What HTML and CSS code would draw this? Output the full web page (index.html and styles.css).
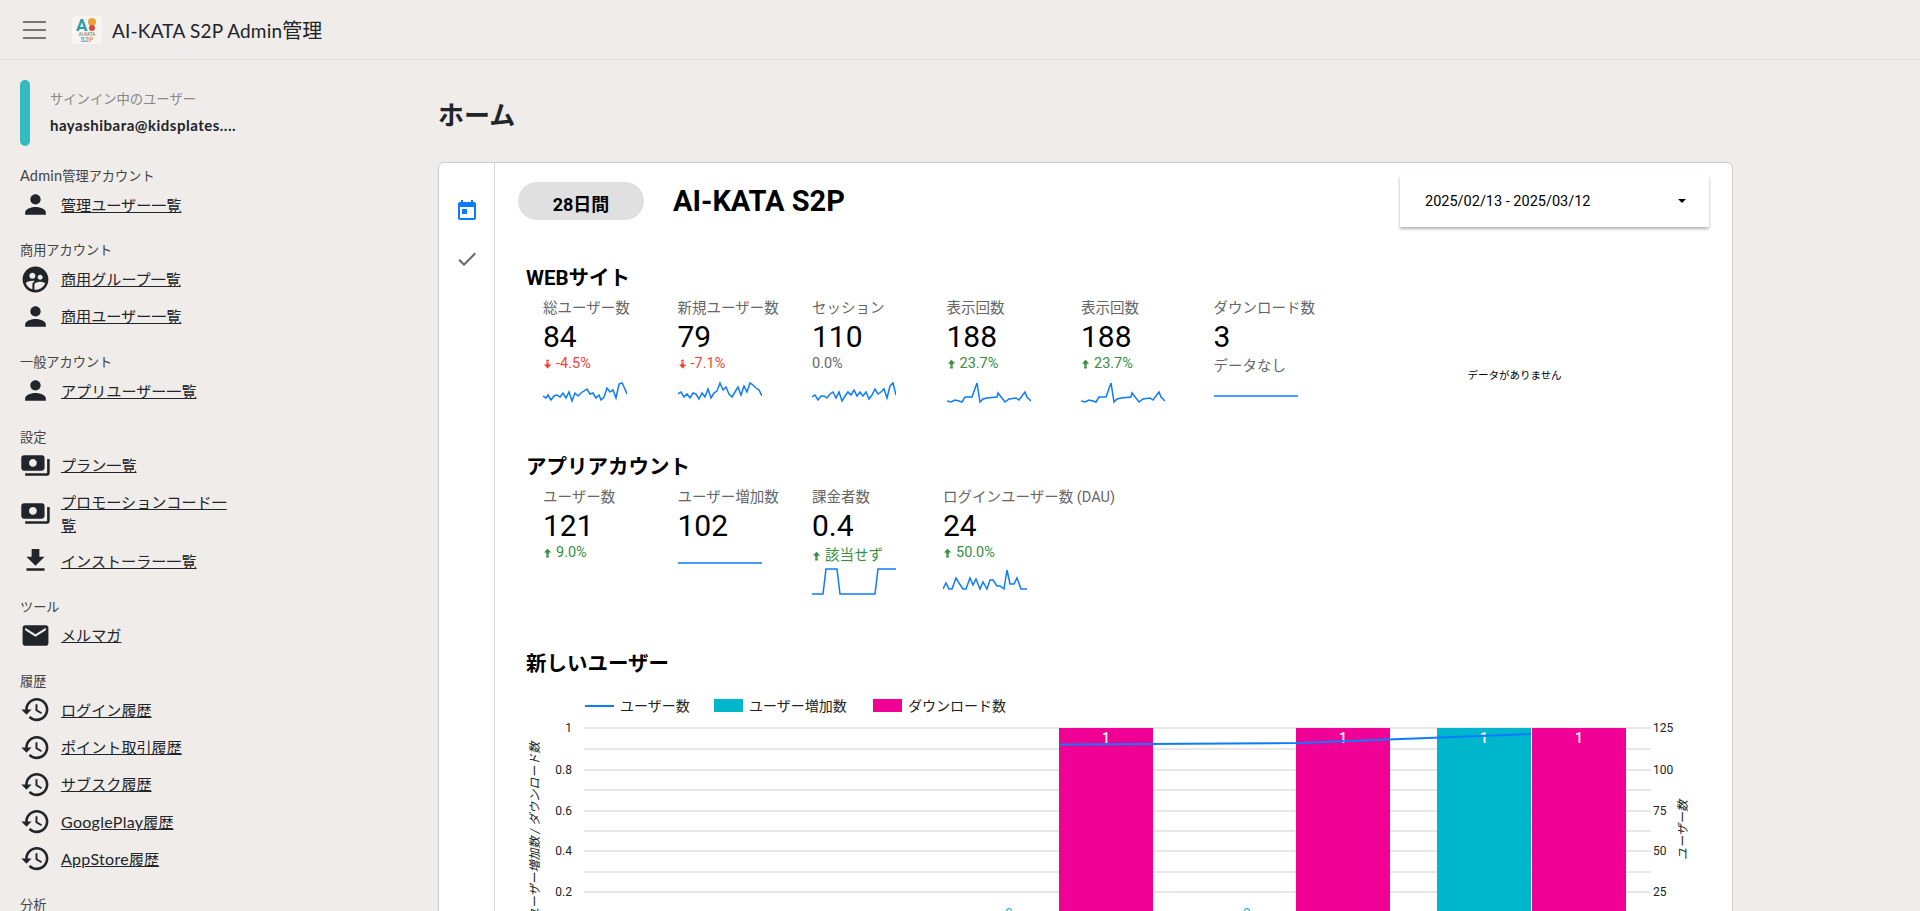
FILE: index.html
```html
<!DOCTYPE html>
<html lang="ja">

<head>
    <meta charset="UTF-8">
    <meta name="viewport" content="width=device-width, initial-scale=1.0">
    <title>AI-KATA S2P Admin管理</title>
    <link rel="stylesheet" href="styles.css">
</head>

<body>

    <header class="topbar">
        <div class="menu-btn"><span></span><span></span><span></span></div>
        <svg class="logo" viewBox="0 0 30 28">
            <rect width="30" height="28" rx="3" fill="#f6f5f2" />
            <text x="4" y="15" class="logo-a">A</text>
            <circle cx="20" cy="6" r="4" fill="#e8a33d" />
            <circle cx="20" cy="12" r="3" fill="#d8483f" />
            <text x="15" y="19.500" class="logo-name">AI-KATA</text>
            <text x="15" y="26" class="logo-s2p"><tspan fill="#3fa9c0">S</tspan><tspan fill="#e8799a">2</tspan><tspan fill="#e8a33d">P</tspan></text>
        </svg>
        <div class="brand"><span class="latin">AI-KATA S2P Admin</span>管理</div>
    </header>

    <div class="layout">
        <nav class="sidebar">
            <div class="signed-in">
                <div class="signed-bar"></div>
                <div class="signed-text">
                    <p class="signed-label">サインイン中のユーザー</p>
                    <p class="signed-mail">hayashibara@kidsplates....</p>
                </div>
            </div>

            <div class="nav-group">
                <p class="nav-title"><span class="latin">Admin</span>管理アカウント</p>
                <div class="nav-item">
                    <svg class="nav-icon" viewBox="0 0 24 24"><path d="M12 12c2.21 0 4-1.79 4-4s-1.79-4-4-4-4 1.79-4 4 1.79 4 4 4zm0 2c-2.67 0-8 1.34-8 4v2h16v-2c0-2.66-5.33-4-8-4z" /></svg>
                    <a href="#">管理ユーザー一覧</a>
                </div>
            </div>

            <div class="nav-group">
                <p class="nav-title">商用アカウント</p>
                <div class="nav-item">
                    <svg class="nav-icon" viewBox="0 0 24 24"><path d="M11.99 2c-5.52 0-10 4.48-10 10s4.48 10 10 10 10-4.48 10-10-4.48-10-10-10zm3.61 6.34c1.07 0 1.93.86 1.93 1.93 0 1.07-.86 1.93-1.93 1.93-1.07 0-1.93-.86-1.93-1.93-.01-1.07.86-1.93 1.93-1.93zm-6-1.58c1.3 0 2.36 1.06 2.36 2.36 0 1.3-1.06 2.36-2.36 2.36s-2.36-1.06-2.36-2.36c0-1.31 1.05-2.36 2.36-2.36zm0 9.13v3.75c-2.4-.75-4.3-2.6-5.14-4.96 1.05-1.12 3.67-1.69 5.14-1.69.53 0 1.2.08 1.9.22-1.64.87-1.9 2.02-1.9 2.68zM11.99 20c-.27 0-.53-.01-.79-.04v-4.07c0-1.42 2.94-2.13 4.4-2.13 1.07 0 2.92.39 3.84 1.15-1.17 2.97-4.06 5.09-7.45 5.09z" /></svg>
                    <a href="#">商用グループ一覧</a>
                </div>
                <div class="nav-item">
                    <svg class="nav-icon" viewBox="0 0 24 24"><path d="M12 12c2.21 0 4-1.79 4-4s-1.79-4-4-4-4 1.79-4 4 1.79 4 4 4zm0 2c-2.67 0-8 1.34-8 4v2h16v-2c0-2.66-5.33-4-8-4z" /></svg>
                    <a href="#">商用ユーザー一覧</a>
                </div>
            </div>

            <div class="nav-group">
                <p class="nav-title">一般アカウント</p>
                <div class="nav-item">
                    <svg class="nav-icon" viewBox="0 0 24 24"><path d="M12 12c2.21 0 4-1.79 4-4s-1.79-4-4-4-4 1.79-4 4 1.79 4 4 4zm0 2c-2.67 0-8 1.34-8 4v2h16v-2c0-2.66-5.33-4-8-4z" /></svg>
                    <a href="#">アプリユーザー一覧</a>
                </div>
            </div>

            <div class="nav-group">
                <p class="nav-title">設定</p>
                <div class="nav-item">
                    <svg class="nav-icon" viewBox="0 0 24 24"><path d="M19 14V6c0-1.100-.9-2-2-2H3c-1.100 0-2 .9-2 2v8c0 1.100.9 2 2 2h14c1.100 0 2-.9 2-2zm-9-1c-1.660 0-3-1.340-3-3s1.340-3 3-3 3 1.340 3 3-1.340 3-3 3zm13-6v11c0 1.100-.9 2-2 2H4v-2h17V7h2z" /></svg>
                    <a href="#">プラン一覧</a>
                </div>
                <div class="nav-item nav-item-wrap">
                    <svg class="nav-icon" viewBox="0 0 24 24"><path d="M19 14V6c0-1.100-.9-2-2-2H3c-1.100 0-2 .9-2 2v8c0 1.100.9 2 2 2h14c1.100 0 2-.9 2-2zm-9-1c-1.660 0-3-1.340-3-3s1.340-3 3-3 3 1.340 3 3-1.340 3-3 3zm13-6v11c0 1.100-.9 2-2 2H4v-2h17V7h2z" /></svg>
                    <a href="#">プロモーションコード一覧</a>
                </div>
                <div class="nav-item">
                    <svg class="nav-icon" viewBox="0 0 24 24"><path d="M19 9h-4V3H9v6H5l7 7 7-7zM5 18v2h14v-2H5z" /></svg>
                    <a href="#">インストーラー一覧</a>
                </div>
            </div>

            <div class="nav-group">
                <p class="nav-title">ツール</p>
                <div class="nav-item">
                    <svg class="nav-icon" viewBox="0 0 24 24"><path d="M20 4H4c-1.100 0-1.990.9-1.990 2L2 18c0 1.100.9 2 2 2h16c1.100 0 2-.9 2-2V6c0-1.100-.9-2-2-2zm0 4l-8 5-8-5V6l8 5 8-5v2z" /></svg>
                    <a href="#">メルマガ</a>
                </div>
            </div>

            <div class="nav-group">
                <p class="nav-title">履歴</p>
                <div class="nav-item">
                    <svg class="nav-icon" viewBox="0 0 24 24"><path d="M13 3c-4.970 0-9 4.030-9 9H1l3.890 3.890.07.14L9 12H6c0-3.870 3.130-7 7-7s7 3.130 7 7-3.130 7-7 7c-1.930 0-3.680-.79-4.940-2.060l-1.420 1.420C8.270 19.990 10.510 21 13 21c4.970 0 9-4.030 9-9s-4.030-9-9-9zm-1 5v5l4.280 2.540.72-1.210-3.500-2.080V8H12z" /></svg>
                    <a href="#">ログイン履歴</a>
                </div>
                <div class="nav-item">
                    <svg class="nav-icon" viewBox="0 0 24 24"><path d="M13 3c-4.970 0-9 4.030-9 9H1l3.890 3.890.07.14L9 12H6c0-3.870 3.130-7 7-7s7 3.130 7 7-3.130 7-7 7c-1.930 0-3.680-.79-4.940-2.060l-1.420 1.420C8.270 19.990 10.510 21 13 21c4.970 0 9-4.030 9-9s-4.030-9-9-9zm-1 5v5l4.280 2.540.72-1.210-3.500-2.080V8H12z" /></svg>
                    <a href="#">ポイント取引履歴</a>
                </div>
                <div class="nav-item">
                    <svg class="nav-icon" viewBox="0 0 24 24"><path d="M13 3c-4.970 0-9 4.030-9 9H1l3.890 3.890.07.14L9 12H6c0-3.870 3.130-7 7-7s7 3.130 7 7-3.130 7-7 7c-1.930 0-3.680-.79-4.940-2.060l-1.420 1.420C8.270 19.990 10.510 21 13 21c4.970 0 9-4.030 9-9s-4.030-9-9-9zm-1 5v5l4.280 2.540.72-1.210-3.500-2.080V8H12z" /></svg>
                    <a href="#">サブスク履歴</a>
                </div>
                <div class="nav-item">
                    <svg class="nav-icon" viewBox="0 0 24 24"><path d="M13 3c-4.970 0-9 4.030-9 9H1l3.890 3.890.07.14L9 12H6c0-3.870 3.130-7 7-7s7 3.130 7 7-3.130 7-7 7c-1.930 0-3.680-.79-4.940-2.060l-1.420 1.420C8.270 19.990 10.510 21 13 21c4.970 0 9-4.030 9-9s-4.030-9-9-9zm-1 5v5l4.280 2.540.72-1.210-3.500-2.080V8H12z" /></svg>
                    <a href="#"><span class="latin">GooglePlay</span>履歴</a>
                </div>
                <div class="nav-item">
                    <svg class="nav-icon" viewBox="0 0 24 24"><path d="M13 3c-4.970 0-9 4.030-9 9H1l3.890 3.890.07.14L9 12H6c0-3.870 3.130-7 7-7s7 3.130 7 7-3.130 7-7 7c-1.930 0-3.680-.79-4.940-2.060l-1.420 1.420C8.270 19.990 10.510 21 13 21c4.970 0 9-4.030 9-9s-4.030-9-9-9zm-1 5v5l4.280 2.540.72-1.210-3.500-2.080V8H12z" /></svg>
                    <a href="#"><span class="latin">AppStore</span>履歴</a>
                </div>
            </div>

            <div class="nav-group">
                <p class="nav-title">分析</p>
            </div>
        </nav>

        <main class="content">
            <h1 class="page-title">ホーム</h1>

            <div class="card">
                <aside class="rail">
                    <svg class="rail-icon rail-active" viewBox="0 0 24 24"><path d="M19 3h-1V1h-2v2H8V1H6v2H5c-1.110 0-1.990.9-1.990 2L3 19c0 1.100.89 2 2 2h14c1.100 0 2-.9 2-2V5c0-1.100-.9-2-2-2zm0 16H5V8h14v11zM7 10h5v5H7z" /></svg>
                    <svg class="rail-icon" viewBox="0 0 24 24"><path d="M9 16.170L4.830 12l-1.420 1.410L9 19 21 7l-1.410-1.410z" /></svg>
                </aside>

                <div class="panel">
                    <div class="panel-head">
                        <div class="period-pill">28日間</div>
                        <div class="app-name">AI-KATA S2P</div>
                        <div class="date-select">
                            <span>2025/02/13 - 2025/03/12</span>
                            <span class="caret"></span>
                        </div>
                    </div>

                    <h2 class="section-title web-title">WEBサイト</h2>
                    <div class="metrics">
                        <div class="metric">
                            <p class="metric-label">総ユーザー数</p>
                            <p class="metric-value">84</p>
                            <p class="metric-delta down"><svg class="arrow" viewBox="0 0 8 10"><path d="M2.500 0h3v1.500h-3zM2.500 2h3v1.500h-3zM2.500 4h3v1.500h3L4 10 0 5.500h2.500z" /></svg>-4.5%</p>
                            <svg class="spark" viewBox="0 0 84 28"><polyline points="0,18 3,20 5,17 8,22 11,18 14,17 17,19 20,15 23,20 26,14 29,23 32,15 35,18 38,15 41,13 44,11 47,16 50,15 53,20 56,17 58,22 61,19 64,10 67,14 70,12 73,20 76,6 79,5 81,9 84,16" /></svg>
                        </div>
                        <div class="metric">
                            <p class="metric-label">新規ユーザー数</p>
                            <p class="metric-value">79</p>
                            <p class="metric-delta down"><svg class="arrow" viewBox="0 0 8 10"><path d="M2.500 0h3v1.500h-3zM2.500 2h3v1.500h-3zM2.500 4h3v1.500h3L4 10 0 5.500h2.500z" /></svg>-7.1%</p>
                            <svg class="spark" viewBox="0 0 84 28"><polyline points="0,16 3,14 6,19 9,16 12,20 15,15 18,16 21,21 24,15 27,19 30,11 33,20 36,15 39,13 42,5 45,12 48,9 51,16 54,19 57,14 60,9 63,17 66,8 69,14 72,5 75,7 78,10 81,12 84,18" /></svg>
                        </div>
                        <div class="metric">
                            <p class="metric-label">セッション</p>
                            <p class="metric-value">110</p>
                            <p class="metric-delta flat">0.0%</p>
                            <svg class="spark" viewBox="0 0 84 28"><polyline points="0,19 3,17 6,22 9,18 12,18 15,20 18,16 21,14 24,20 27,14 30,23 33,18 36,14 39,17 42,12 45,18 48,14 51,18 54,14 57,21 60,17 63,11 66,16 69,14 72,11 75,20 78,8 81,5 84,17" /></svg>
                        </div>
                        <div class="metric">
                            <p class="metric-label">表示回数</p>
                            <p class="metric-value">188</p>
                            <p class="metric-delta up"><svg class="arrow" viewBox="0 0 8 10"><path d="M2.500 10h3V8.500h-3zM2.500 8h3V6.500h-3zM2.500 6h3V4.500h3L4 0 0 4.500h2.500z" /></svg>23.7%</p>
                            <svg class="spark" viewBox="0 0 84 28"><polyline points="0,23 4,24 8,22 12,23 15,24 18,19 25,19 30,5 33,24 36,21 40,20 50,19 51,15 58,24 62,21 69,20 72,22 78,14 80,19 84,23" /></svg>
                        </div>
                        <div class="metric">
                            <p class="metric-label">表示回数</p>
                            <p class="metric-value">188</p>
                            <p class="metric-delta up"><svg class="arrow" viewBox="0 0 8 10"><path d="M2.500 10h3V8.500h-3zM2.500 8h3V6.500h-3zM2.500 6h3V4.500h3L4 0 0 4.500h2.500z" /></svg>23.7%</p>
                            <svg class="spark" viewBox="0 0 84 28"><polyline points="0,23 4,24 8,22 12,23 15,24 18,19 25,19 30,5 33,24 36,21 40,20 50,19 51,15 58,24 62,21 69,20 72,22 78,14 80,19 84,23" /></svg>
                        </div>
                        <div class="metric metric-last">
                            <p class="metric-label">ダウンロード数</p>
                            <p class="metric-value">3</p>
                            <p class="metric-delta none">データなし</p>
                            <svg class="spark spark-none" viewBox="0 0 84 28"><polyline points="0,18 84,18" /></svg>
                        </div>
                        <div class="no-data">データがありません</div>
                    </div>

                    <h2 class="section-title app-title">アプリアカウント</h2>
                    <div class="metrics">
                        <div class="metric">
                            <p class="metric-label">ユーザー数</p>
                            <p class="metric-value">121</p>
                            <p class="metric-delta up"><svg class="arrow" viewBox="0 0 8 10"><path d="M2.500 10h3V8.500h-3zM2.500 8h3V6.500h-3zM2.500 6h3V4.500h3L4 0 0 4.500h2.500z" /></svg>9.0%</p>
                        </div>
                        <div class="metric">
                            <p class="metric-label">ユーザー増加数</p>
                            <p class="metric-value">102</p>
                            <svg class="spark spark-flat" viewBox="0 0 84 28"><polyline points="0,3 84,3" /></svg>
                        </div>
                        <div class="metric metric-narrow">
                            <p class="metric-label">課金者数</p>
                            <p class="metric-value">0.4</p>
                            <p class="metric-delta up delta-text"><svg class="arrow" viewBox="0 0 8 10"><path d="M2.500 10h3V8.500h-3zM2.500 8h3V6.500h-3zM2.500 6h3V4.500h3L4 0 0 4.500h2.500z" /></svg>該当せず</p>
                            <svg class="spark spark-charge" viewBox="0 0 84 28"><polyline points="0,27 11,27 14,2 25,2 28,27 63,27 66,2 84,2" /></svg>
                        </div>
                        <div class="metric">
                            <p class="metric-label">ログインユーザー数 (DAU)</p>
                            <p class="metric-value">24</p>
                            <p class="metric-delta up"><svg class="arrow" viewBox="0 0 8 10"><path d="M2.500 10h3V8.500h-3zM2.500 8h3V6.500h-3zM2.500 6h3V4.500h3L4 0 0 4.500h2.500z" /></svg>50.0%</p>
                            <svg class="spark" viewBox="0 0 84 28"><polyline points="0,22 3,16 6,22 9,22 13,11 16,16 20,22 23,22 27,11 30,18 33,12 37,22 40,15 44,22 47,13 50,13 54,19 57,19 61,22 64,3 67,17 71,17 74,11 78,22 84,22" /></svg>
                        </div>
                    </div>

                    <h2 class="section-title chart-title">新しいユーザー</h2>
                    <svg class="chart" width="1180" height="240" viewBox="0 0 1180 240">
                        <line class="legend-line" x1="59" y1="15" x2="88" y2="15" />
                        <text class="legend-text" x="94" y="20">ユーザー数</text>
                        <rect class="bar-teal" x="188" y="8" width="29" height="13" />
                        <text class="legend-text" x="223" y="20">ユーザー増加数</text>
                        <rect class="bar-pink" x="347" y="8" width="29" height="13" />
                        <text class="legend-text" x="382" y="20">ダウンロード数</text>

                        <g class="grid">
                            <line x1="58" y1="37" x2="1125" y2="37" />
                            <line x1="58" y1="58" x2="1125" y2="58" />
                            <line x1="58" y1="79" x2="1125" y2="79" />
                            <line x1="58" y1="99" x2="1125" y2="99" />
                            <line x1="58" y1="120" x2="1125" y2="120" />
                            <line x1="58" y1="140" x2="1125" y2="140" />
                            <line x1="58" y1="160" x2="1125" y2="160" />
                            <line x1="58" y1="181" x2="1125" y2="181" />
                            <line x1="58" y1="201" x2="1125" y2="201" />
                            <line x1="58" y1="222" x2="1125" y2="222" />
                        </g>

                        <g class="tick tick-left">
                            <text x="46" y="41">1</text>
                            <text x="46" y="83">0.8</text>
                            <text x="46" y="124">0.6</text>
                            <text x="46" y="164">0.4</text>
                            <text x="46" y="205">0.2</text>
                        </g>
                        <g class="tick">
                            <text x="1127" y="41">125</text>
                            <text x="1127" y="83">100</text>
                            <text x="1127" y="124">75</text>
                            <text x="1127" y="164">50</text>
                            <text x="1127" y="205">25</text>
                        </g>
                        <text class="axis-title" transform="translate(13 140) rotate(-90)">ユーザー増加数 / ダウンロード数</text>
                        <text class="axis-title" transform="translate(1161 139) rotate(-90)">ユーザー数</text>

                        <rect class="bar-pink" x="533" y="37" width="94" height="203" />
                        <rect class="bar-pink" x="770" y="37" width="94" height="203" />
                        <rect class="bar-teal" x="911" y="37" width="94" height="203" />
                        <rect class="bar-pink" x="1006" y="37" width="94" height="203" />

                        <g class="bar-label">
                            <text x="580" y="52">1</text>
                            <text x="817" y="52">1</text>
                            <text x="958" y="52">1</text>
                            <text x="1053" y="52">1</text>
                        </g>
                        <g class="zero-label">
                            <text x="483" y="226">0</text>
                            <text x="721" y="226">0</text>
                        </g>
                        <polyline class="user-line" points="533,53.500 770,52 1005,43" />
                    </svg>
                </div>
            </div>
        </main>
    </div>

</body>

</html>
```
FILE: styles.css
```css
* {
    box-sizing: border-box;
}

html,
body {
    height: 100%;
    margin: 0;
    overflow: hidden;
}

body {
    background-color: #efecE9;
    color: #212529;
    font-family: 'Lato', 'Noto Sans CJK JP', sans-serif;
}

p,
h1,
h2 {
    margin: 0;
}

.topbar {
    display: flex;
    align-items: center;
    height: 60px;
    padding-left: 23px;
    border-bottom: 1px solid #dfe3e6;
}

.menu-btn {
    display: flex;
    flex-direction: column;
    gap: 6px;
    width: 23px;
    margin-right: 26px;
}

.menu-btn span {
    display: block;
    height: 2px;
    background-color: #777;
}

.logo {
    width: 30px;
    height: 28px;
    margin-right: 10px;
}

.logo-a {
    font: bold 17px 'Roboto', sans-serif;
    fill: #2a9aa8;
}

.logo-name {
    font: 4.500px 'Roboto', sans-serif;
    fill: #666;
    text-anchor: middle;
}

.logo-s2p {
    font: bold 7px 'Roboto', sans-serif;
    text-anchor: middle;
}

.brand {
    font-size: 20px;
}

.brand .latin {
    font-size: 19px;
}

.latin {
    letter-spacing: 0.2px;
}

.layout {
    display: flex;
}

.sidebar {
    flex: none;
    width: 438px;
    padding: 20px 0 0 20px;
}

.signed-in {
    display: flex;
    align-items: center;
    gap: 20px;
    height: 66px;
    margin-bottom: 20px;
}

.signed-bar {
    width: 10px;
    height: 100%;
    border-radius: 5px;
    background-color: #33bbbf;
}

.signed-text {
    padding-bottom: 2.500px;
}

.signed-label {
    margin-bottom: 7.500px;
    font-size: 13.300px;
    line-height: 18px;
    color: #888;
}

.signed-mail {
    font-size: 15px;
    font-weight: 700;
    line-height: 18px;
    letter-spacing: 0.5px;
}

.nav-group {
    margin-bottom: 17.200px;
}

.nav-title {
    font-size: 13.200px;
    line-height: 20px;
    color: #444;
}

.nav-title .latin {
    font-size: 14.500px;
}

.nav-item {
    display: flex;
    align-items: center;
    gap: 10px;
    padding: 6.650px 0;
    font-size: 15.100px;
    line-height: 24px;
}

.nav-item-wrap {
    line-height: 23px;
    margin-bottom: -1px;
}

.nav-item a {
    max-width: 170px;
    color: #212529;
}

.nav-item .latin {
    font-size: 16px;
    letter-spacing: 0.3px;
}

.nav-icon {
    flex: none;
    width: 31px;
    height: 31px;
    margin: -4px 0;
    fill: #212529;
}

.content {
    flex: 1;
    min-width: 0;
    padding-right: 187px;
    font-family: 'Roboto', 'Noto Sans CJK JP', sans-serif;
}

.page-title {
    height: 102px;
    padding-top: 36px;
    font-size: 26px;
    line-height: 36px;
    font-weight: 700;
    font-family: 'Noto Sans CJK JP', sans-serif;
}

.card {
    display: flex;
    height: 900px;
    background-color: #fff;
    border: 1px solid #ccc;
    border-radius: 6px;
}

.rail {
    flex: none;
    display: flex;
    flex-direction: column;
    align-items: center;
    gap: 24px;
    width: 56px;
    padding-top: 36px;
    border-right: 1px solid #d5d5d5;
}

.rail-icon {
    width: 24px;
    height: 24px;
    fill: #666;
}

.rail-active {
    fill: #0d7bff;
}

.panel {
    flex: 1;
    min-width: 0;
    padding: 12px 23px 0 23px;
    color: #000;
}

.panel-head {
    display: flex;
    align-items: center;
    height: 52px;
}

.period-pill {
    width: 126px;
    height: 38px;
    padding-top: 9px;
    border-radius: 19px;
    background-color: #e0e0e0;
    font-size: 18px;
    line-height: 28px;
    font-weight: 700;
    text-align: center;
}

.app-name {
    margin-left: 29px;
    font-size: 29px;
    font-weight: 700;
}

.date-select {
    display: flex;
    align-items: center;
    justify-content: space-between;
    width: 309px;
    height: 52px;
    margin-left: auto;
    padding: 0 23px 0 25px;
    background-color: #fff;
    box-shadow: 0 2px 3px rgba(0, 0, 0, 0.3);
    font-size: 14.500px;
}

.caret {
    border-top: 4px solid #000;
    border-left: 4px solid transparent;
    border-right: 4px solid transparent;
}

.section-title {
    padding-left: 8px;
    font-size: 20.500px;
    line-height: 24px;
    font-weight: 700;
}

.web-title {
    margin-top: 39px;
}

.app-title {
    margin-top: 49px;
}

.chart-title {
    margin-top: 57px;
}

.metrics {
    display: flex;
    margin-top: 9px;
    padding-left: 25px;
}

.metric {
    flex: none;
    width: 134.500px;
}

.metric-narrow {
    width: 131px;
}

.metric-last {
    margin-left: -2px;
}

.metric-label {
    font-size: 14.500px;
    line-height: 20px;
    color: #666;
    white-space: nowrap;
}

.metric-value {
    font-size: 30px;
    line-height: 36px;
}

.metric-delta {
    display: flex;
    align-items: center;
    gap: 5px;
    font-size: 14.500px;
    line-height: 18px;
    white-space: nowrap;
}

.arrow {
    width: 7px;
    height: 10px;
    margin-left: 1px;
    fill: currentColor;
}

.down {
    color: #f44336;
}

.up {
    color: #388e3c;
}

.flat {
    color: #666;
}

.none {
    color: #666;
    line-height: 24px;
}

.delta-text {
    line-height: 24px;
}

.spark {
    display: block;
    width: 84px;
    height: 28px;
    margin-top: 5px;
    fill: none;
    stroke: #0d7bff;
    stroke-width: 1.500;
}

.spark-none {
    margin-top: -1px;
}

.spark-flat {
    margin-top: 16px;
}

.spark-charge {
    margin-top: -1px;
}

.no-data {
    flex: 1;
    align-self: flex-end;
    padding: 0 28px 24px 0;
    font-size: 10.500px;
    text-align: center;
}

.chart {
    display: block;
    margin: 15px 0 0 8px;
    overflow: hidden;
}

.legend-line {
    stroke: #0d7bff;
    stroke-width: 2;
}

.legend-text {
    font-size: 14px;
    fill: #222;
}

.bar-teal {
    fill: #00b6cc;
}

.bar-pink {
    fill: #f10096;
}

.grid line {
    stroke: #d0d0d0;
    stroke-width: 1;
}

.tick text {
    font-size: 12px;
    fill: #222;
}

.tick-left text {
    text-anchor: end;
}

.axis-title {
    font-size: 12px;
    font-style: italic;
    text-anchor: middle;
    fill: #222;
}

.bar-label text {
    font-size: 14px;
    font-weight: 500;
    fill: #fff;
    text-anchor: middle;
}

.zero-label text {
    font-size: 13px;
    fill: #00b6cc;
    text-anchor: middle;
}

.user-line {
    fill: none;
    stroke: #0d7bff;
    stroke-width: 2;
}
```
